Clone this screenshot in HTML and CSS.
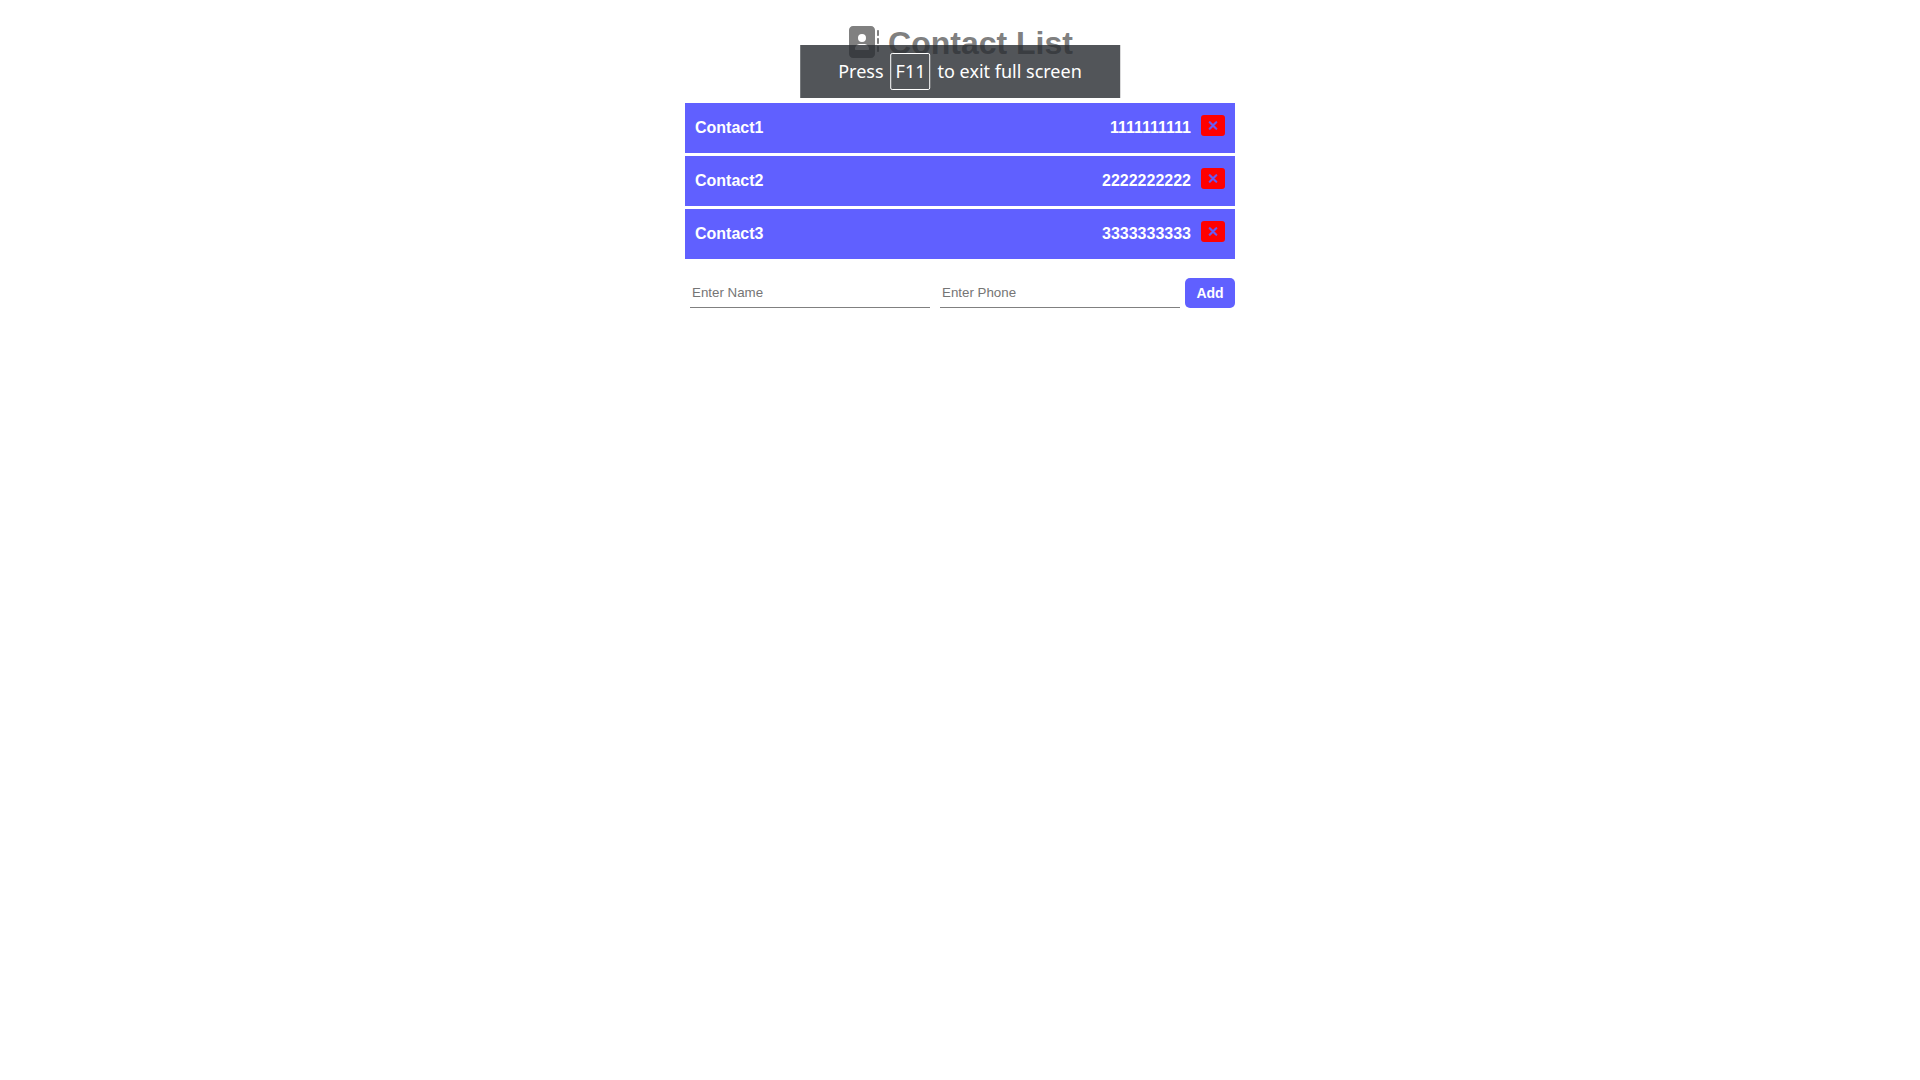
FILE: index.html
```html
<!DOCTYPE html>
<html lang="en">
<head>
<meta charset="utf-8">
<meta name="viewport" content="width=device-width, initial-scale=1">
<title>Contact List</title>
<link rel="stylesheet" href="styles.css">
</head>
<body>
<svg class="sprite" aria-hidden="true">
  <symbol id="xmark" viewBox="0 0 320 512"><path d="M310.6 150.6c12.500-12.500 12.500-32.800 0-45.300s-32.800-12.500-45.300 0L160 210.700 54.600 105.400c-12.500-12.500-32.800-12.500-45.300 0s-12.500 32.800 0 45.300L114.700 256 9.400 361.400c-12.500 12.500-12.500 32.800 0 45.300s32.800 12.500 45.300 0L160 301.300 265.400 406.600c12.500 12.500 32.800 12.500 45.300 0s12.500-32.800 0-45.300L205.300 256 310.600 150.600z"/></symbol>
</svg>
<main class="app">
  <h1 class="title">
    <svg class="title-icon" viewBox="0 0 512 512" aria-hidden="true"><path d="M96 0C60.7 0 32 28.7 32 64V448c0 35.3 28.7 64 64 64H384c35.3 0 64-28.7 64-64V64c0-35.3-28.7-64-64-64H96zM208 288h64c44.2 0 80 35.8 80 80c0 8.8-7.2 16-16 16H144c-8.8 0-16-7.2-16-16c0-44.2 35.8-80 80-80zm-32-96a64 64 0 1 1 128 0 64 64 0 1 1-128 0zM512 80c0-8.8-7.2-16-16-16s-16 7.2-16 16v64c0 8.8 7.2 16 16 16s16-7.2 16-16V80zM496 192c-8.8 0-16 7.2-16 16v64c0 8.8 7.2 16 16 16s16-7.2 16-16V208c0-8.8-7.2-16-16-16zm16 144c0-8.800-7.200-16-16-16s-16 7.200-16 16v64c0 8.800 7.200 16 16 16s16-7.200 16-16V336z"/></svg>
    <span>Contact List</span>
  </h1>
  <ul class="contacts">
    <li class="contact"><span class="name">Contact1</span><span>1111111111</span><button class="remove" type="button" aria-label="Delete Contact1"><svg class="remove-icon"><use href="#xmark"/></svg></button></li>
    <li class="contact"><span class="name">Contact2</span><span>2222222222</span><button class="remove" type="button" aria-label="Delete Contact2"><svg class="remove-icon"><use href="#xmark"/></svg></button></li>
    <li class="contact"><span class="name">Contact3</span><span>3333333333</span><button class="remove" type="button" aria-label="Delete Contact3"><svg class="remove-icon"><use href="#xmark"/></svg></button></li>
  </ul>
  <form class="add-form">
    <input class="field" type="text" placeholder="Enter Name" aria-label="Name">
    <input class="field" type="tel" placeholder="Enter Phone" aria-label="Phone">
    <button class="add" type="button">Add</button>
  </form>
</main>
<div class="toast" role="status"><span>Press</span><kbd class="key">F11</kbd><span>to exit full screen</span></div>
</body>
</html>
```
FILE: styles.css
```css
* {
  box-sizing: border-box;
}

body {
  margin: 0;
  background: #fff;
  font-family: "Liberation Sans", Arial, sans-serif;
}

.sprite {
  display: none;
}

.app {
  max-width: 550px;
  margin: 0 auto;
  padding-top: 26px;
}

.title {
  display: flex;
  align-items: flex-start;
  justify-content: center;
  gap: 9px;
  margin: 0 0 43px;
  font-size: 32px;
  line-height: 34px;
  color: #808080;
}

.title-icon {
  width: 32px;
  height: 32px;
  fill: currentColor;
}

.contacts {
  display: flex;
  flex-direction: column;
  gap: 3px;
  margin: 0 0 19px;
  padding: 0;
  list-style: none;
}

.contact {
  display: flex;
  align-items: flex-start;
  gap: 10px;
  padding: 11px 10px;
  min-height: 50px;
  background: #6060ff;
  color: #fff;
  font-size: 16px;
  font-weight: bold;
  line-height: 28px;
}

.name {
  flex: 1;
}

.remove {
  display: flex;
  justify-content: center;
  align-items: center;
  width: 24px;
  height: 21px;
  margin-top: 1px;
  padding: 0;
  border: 0;
  border-radius: 3px;
  background: #f00;
  color: #6060ff;
}

.remove-icon {
  width: 10px;
  height: 13px;
  fill: currentColor;
  stroke: currentColor;
  stroke-width: 24px;
}

.add-form {
  display: flex;
  gap: 10px;
  padding-left: 5px;
}

.field {
  flex: 1;
  min-width: 0;
  height: 30px;
  padding: 0 2px;
  border: 0;
  border-bottom: 1px solid #808080;
  outline: 0;
  background: transparent;
  font-family: inherit;
}

.field::placeholder {
  color: #757575;
}

.add {
  width: 50px;
  height: 30px;
  margin-left: -5px;
  padding: 0;
  border: 0;
  border-radius: 5px;
  background: #6060ff;
  color: #fff;
  font-family: inherit;
  font-size: 14px;
  font-weight: bold;
}

.toast {
  position: absolute;
  top: 45px;
  left: 50%;
  transform: translateX(-50%);
  display: flex;
  align-items: center;
  gap: 7px;
  padding: 8px 38px;
  background: rgba(42, 46, 51, 0.81);
  color: #fff;
  font-family: "Noto Sans", sans-serif;
  font-size: 18px;
  line-height: 35px;
  white-space: nowrap;
}

.key {
  padding: 0 4px;
  border: 1px solid #fff;
  border-radius: 2px;
  font: inherit;
}
```
